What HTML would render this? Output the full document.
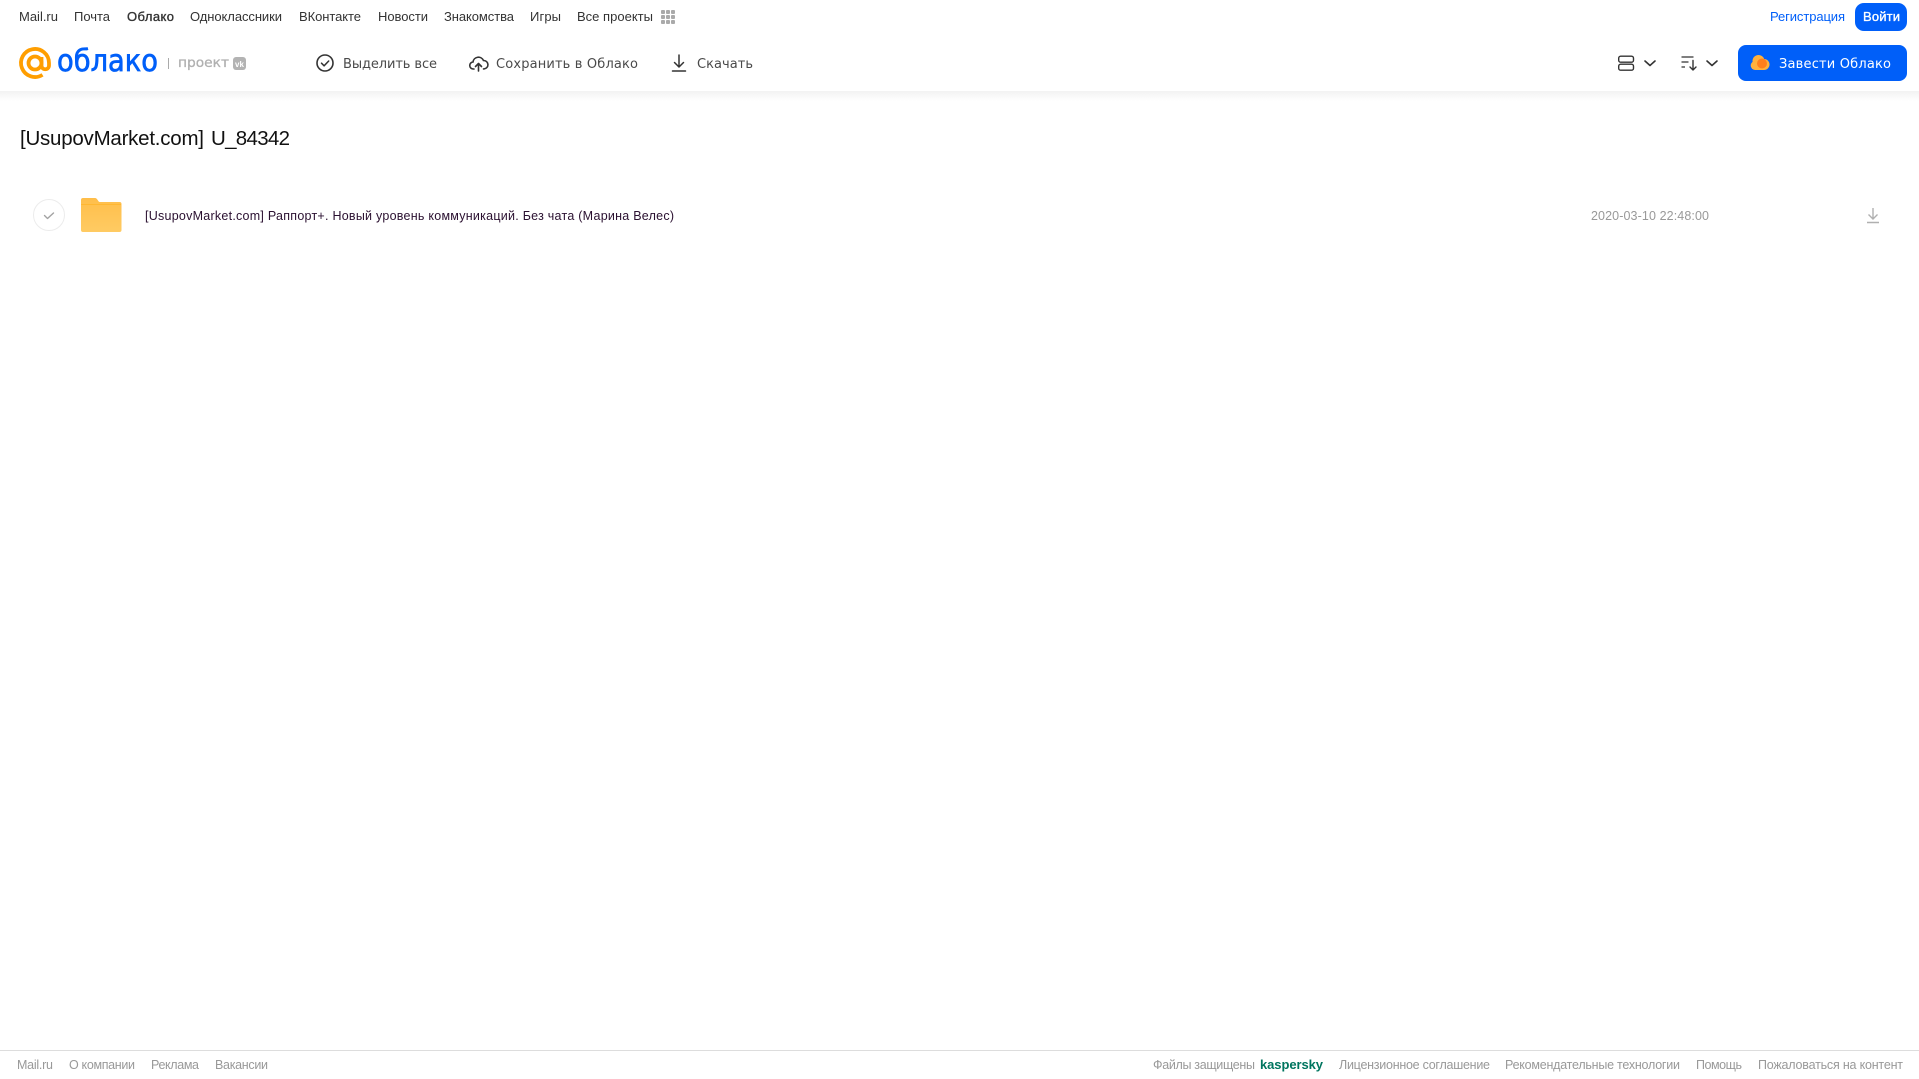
<!DOCTYPE html>
<html lang="ru">
<head>
<meta charset="utf-8">
<title>Облако</title>
<style>
html,body{margin:0;padding:0;width:1919px;height:1079px;overflow:hidden;background:#fff}
svg{display:block;font-family:"Liberation Sans",Arial,sans-serif}
.n{font-size:13px;fill:#333}
.a{font-family:"DejaVu Sans",sans-serif;font-size:13px;fill:#4a4a4a}
.f{font-size:12.5px;fill:#999}
</style>
</head>
<body>
<svg width="1919" height="1079" viewBox="0 0 1919 1079" xmlns="http://www.w3.org/2000/svg">
<defs>
<linearGradient id="sh" x1="0" y1="0" x2="0" y2="1"><stop offset="0" stop-color="#f2f2f2"/><stop offset="1" stop-color="#fff"/></linearGradient>
<linearGradient id="fo" x1="0" y1="0" x2="0" y2="1"><stop offset="0" stop-color="#ffbe4a"/><stop offset="1" stop-color="#ffcb63"/></linearGradient>
</defs>
<rect x="0" y="91" width="1919" height="10" fill="url(#sh)"/>

<!-- top nav -->
<text class="n" x="19" y="21" textLength="39">Mail.ru</text>
<text class="n" x="74" y="21" textLength="36">Почта</text>
<text class="n" x="127" y="21" textLength="47" stroke="#333" stroke-width=".35">Облако</text>
<text class="n" x="190" y="21" textLength="92">Одноклассники</text>
<text class="n" x="299" y="21" textLength="62">ВКонтакте</text>
<text class="n" x="378" y="21" textLength="50">Новости</text>
<text class="n" x="444" y="21" textLength="70">Знакомства</text>
<text class="n" x="530" y="21" textLength="31">Игры</text>
<text class="n" x="577" y="21" textLength="76">Все проекты</text>
<g fill="#aaa">
<rect x="661" y="10" width="4" height="4" rx="1"/><rect x="666" y="10" width="4" height="4" rx="1"/><rect x="671" y="10" width="4" height="4" rx="1"/>
<rect x="661" y="15" width="4" height="4" rx="1"/><rect x="666" y="15" width="4" height="4" rx="1"/><rect x="671" y="15" width="4" height="4" rx="1"/>
<rect x="661" y="20" width="4" height="4" rx="1"/><rect x="666" y="20" width="4" height="4" rx="1"/><rect x="671" y="20" width="4" height="4" rx="1"/>
</g>
<text x="1770" y="21" font-size="13" fill="#005ff9" textLength="75">Регистрация</text>
<rect x="1855" y="3" width="52" height="28" rx="9" fill="#005ff9"/>
<text x="1863" y="21" font-size="13" fill="#fff" stroke="#fff" stroke-width=".35" textLength="37">Войти</text>

<!-- logo -->
<g fill="none" stroke="#ff9e00" stroke-width="3.8">
<circle cx="35" cy="63" r="6.5"/>
<path d="M41.5 57v8.5a3.6 3.6 0 0 0 7.5 0V63a14 14 0 1 0-6.5 11.8"/>
</g>
<text x="57" y="71" font-family="DejaVu Sans, sans-serif" font-size="30" fill="#005ff9" stroke="#005ff9" stroke-width=".7" textLength="101" lengthAdjust="spacingAndGlyphs">облако</text>
<rect x="168" y="58" width="1" height="11" fill="#aaa"/>
<text x="178" y="67" font-family="DejaVu Sans, sans-serif" font-size="13.5" fill="#b0b0b0" stroke="#b0b0b0" stroke-width=".3" textLength="51" lengthAdjust="spacingAndGlyphs">проект</text>
<rect x="233" y="57" width="13" height="13" rx="3" fill="#b3b3b3"/>
<text x="235" y="67" font-size="8" font-weight="700" fill="#fff" textLength="9">vk</text>

<!-- actions -->
<circle cx="325" cy="63" r="8" fill="none" stroke="#333" stroke-width="1.6"/>
<path d="M321.500 63.200l2.600 2.600 4.600-4.800" fill="none" stroke="#333" stroke-width="1.5" stroke-linecap="round" stroke-linejoin="round"/>
<text class="a" x="343" y="68" textLength="94">Выделить все</text>

<path d="M474 69h-.5a3.500 3.500 0 0 1-.5-7 5.500 5.500 0 0 1 10.500-1.500 4.200 4.200 0 0 1 .5 8.400h-.5" fill="none" stroke="#333" stroke-width="1.6" stroke-linecap="round"/>
<path d="M478.500 71V63.500M475.500 66.500l3-3 3 3" fill="none" stroke="#333" stroke-width="1.6" stroke-linecap="round" stroke-linejoin="round"/>
<text class="a" x="496" y="68" textLength="142">Сохранить в Облако</text>

<path d="M679 55v12M674.500 62.500l4.500 4.500 4.500-4.500M672.500 71h13" fill="none" stroke="#333" stroke-width="1.5" stroke-linecap="round" stroke-linejoin="round"/>
<text class="a" x="697" y="68" textLength="56">Скачать</text>

<!-- right controls -->
<g fill="none" stroke="#333" stroke-width="1.4">
<rect x="1618.700" y="56.200" width="14.800" height="6" rx="2"/>
<rect x="1618.700" y="64.200" width="14.800" height="6" rx="2"/>
</g>
<path d="M1645 61l5 4.500 5-4.500" fill="none" stroke="#333" stroke-width="1.600" stroke-linecap="round" stroke-linejoin="round"/>
<path d="M1681.500 57h12M1681.500 62h7M1681.500 67h3.500" fill="none" stroke="#333" stroke-width="1.300"/>
<path d="M1693 60.500V70M1690 67l3 3 3-3" fill="none" stroke="#333" stroke-width="1.400" stroke-linecap="round" stroke-linejoin="round"/>
<path d="M1707 61l5 4.500 5-4.500" fill="none" stroke="#333" stroke-width="1.600" stroke-linecap="round" stroke-linejoin="round"/>

<rect x="1738" y="45" width="169" height="36" rx="8" fill="#005ff9"/>
<g fill="#ffb13d">
<circle cx="1758.500" cy="61" r="6"/>
<circle cx="1755.200" cy="65.500" r="4.500"/>
<circle cx="1764" cy="64.500" r="5.500"/>
<rect x="1755" y="64" width="9" height="6"/>
</g>
<circle cx="1762" cy="63.500" r="5" fill="#ff7a1a" opacity=".9"/>
<text class="a" x="1779" y="68" style="fill:#fff" textLength="112">Завести Облако</text>

<!-- title -->
<text x="20" y="145" font-size="20.500" fill="#111" textLength="184">[UsupovMarket.com]</text>
<text x="211" y="145" font-size="20.500" fill="#111" textLength="79">U_84342</text>

<!-- row -->
<circle cx="49" cy="215" r="15.500" fill="#fff" stroke="#ececec" stroke-width="1"/>
<path d="M44.500 215.500l3 3 6-5.500" fill="none" stroke="#a3a3a3" stroke-width="1.400" stroke-linecap="round" stroke-linejoin="round"/>
<path d="M83 198h11.500c2 0 2.500 1 3.500 2.500s1 1.500 3 1.500h18.500a2 2 0 0 1 2 2v26a2 2 0 0 1-2 2H83a2 2 0 0 1-2-2v-30a2 2 0 0 1 2-2z" fill="url(#fo)"/>
<rect x="81" y="204" width="40" height="1" fill="#ffb732"/>
<text x="145" y="220" font-size="12.500" fill="#2a1030" textLength="529">[UsupovMarket.com] Раппорт+. Новый уровень коммуникаций. Без чата (Марина Велес)</text>
<text x="1591" y="220" font-size="12.500" fill="#999" textLength="118">2020-03-10 22:48:00</text>
<path d="M1873 208v11M1868.500 214.500l4.500 4.500 4.500-4.500M1867 222.500h12" fill="none" stroke="#b0b0b0" stroke-width="1.400"/>

<!-- footer -->
<rect x="0" y="1050" width="1919" height="1" fill="#ddd"/>
<text class="f" x="17" y="1069" textLength="36">Mail.ru</text>
<text class="f" x="69" y="1069" textLength="66">О компании</text>
<text class="f" x="151" y="1069" textLength="48">Реклама</text>
<text class="f" x="215" y="1069" textLength="53">Вакансии</text>
<text class="f" x="1153" y="1069" textLength="102">Файлы защищены</text>
<text x="1260" y="1069" font-size="13" font-weight="700" fill="#00755f" textLength="63">kaspersky</text>
<text class="f" x="1339" y="1069" textLength="151">Лицензионное соглашение</text>
<text class="f" x="1505" y="1069" textLength="175">Рекомендательные технологии</text>
<text class="f" x="1696" y="1069" textLength="46">Помощь</text>
<text class="f" x="1758" y="1069" textLength="145">Пожаловаться на контент</text>
</svg>
</body>
</html>
